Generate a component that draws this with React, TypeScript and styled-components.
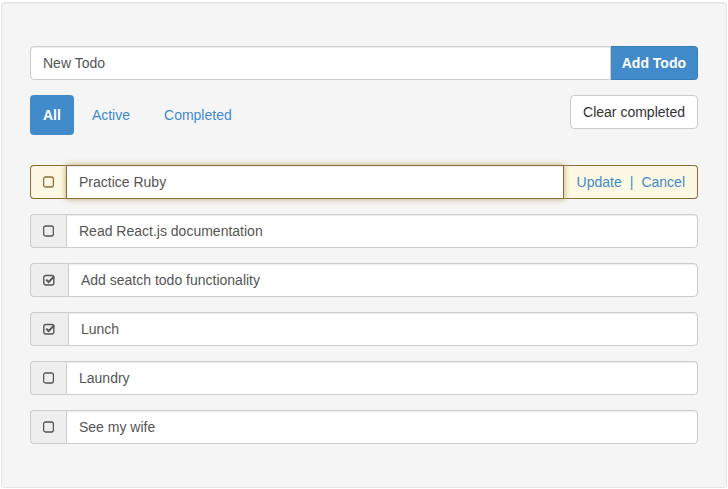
import React from "react";
import styled, { createGlobalStyle } from "styled-components";

const GlobalStyle = createGlobalStyle`
  html, body {
    margin: 0;
    padding: 0;
    background: #fff;
  }
  body {
    font-family: "Liberation Sans", Arial, sans-serif;
    font-size: 14px;
    line-height: 1.428571429;
    color: #333;
  }
  * {
    box-sizing: border-box;
  }
`;

const Well = styled.div`
  margin: 2px 1px 1px 1px;
  height: 486px;
  padding: 43px 28px;
  background-color: #f5f5f5;
  border: 1px solid #e3e3e3;
  border-radius: 4px;
  box-shadow: inset 0 1px 1px rgba(0, 0, 0, 0.05);
  display: flex;
  flex-direction: column;
`;

const InputGroup = styled.div`
  display: flex;
  height: 34px;
`;

const TextField = styled.input<{ $warning?: boolean }>`
  flex: 1;
  min-width: 0;
  height: 34px;
  padding: 6px 12px;
  font-family: inherit;
  font-size: 14px;
  color: #555;
  background: #fff;
  border: 1px solid ${(p) => (p.$warning ? "#8a6d3b" : "#ccc")};
  box-shadow: ${(p) =>
    p.$warning
      ? "inset 0 1px 1px rgba(0,0,0,.075), 0 0 6px #c0a16b"
      : "inset 0 1px 1px rgba(0,0,0,.075)"};
  outline: none;
  border-radius: 0;
  position: relative;
  z-index: ${(p) => (p.$warning ? 2 : 0)};
  &:first-child {
    border-radius: 4px 0 0 4px;
  }
  &:last-child {
    border-radius: 0 4px 4px 0;
  }
  &::placeholder {
    color: #555;
  }
`;

const PrimaryButton = styled.button`
  height: 34px;
  padding: 6px 11px;
  font-family: inherit;
  font-size: 14px;
  font-weight: bold;
  color: #fff;
  background-color: #428bca;
  border: 1px solid #357ebd;
  border-left: 0;
  border-radius: 0 4px 4px 0;
`;

const FilterBar = styled.div`
  display: flex;
  align-items: flex-start;
  justify-content: space-between;
  margin: 15px 0 30px;
`;

const Pills = styled.ul`
  display: flex;
  gap: 2px;
  margin: 0;
  padding: 0;
  list-style: none;
`;

const Pill = styled.a<{ $active?: boolean }>`
  display: block;
  padding: ${(p) => (p.$active ? "10px 13px" : "10px 16px")};
  line-height: 20px;
  border-radius: 4px;
  text-decoration: none;
  font-weight: ${(p) => (p.$active ? "bold" : "normal")};
  color: ${(p) => (p.$active ? "#fff" : "#428bca")};
  background: ${(p) => (p.$active ? "#428bca" : "transparent")};
`;

const DefaultButton = styled.button`
  height: 34px;
  padding: 6px 12px;
  font-family: inherit;
  font-size: 14px;
  color: #333;
  background: #fff;
  border: 1px solid #ccc;
  border-radius: 4px;
`;

const TodoList = styled.div`
  display: flex;
  flex-direction: column;
  gap: 15px;
`;

const Addon = styled.span<{ $warning?: boolean }>`
  display: flex;
  align-items: center;
  justify-content: center;
  padding: 6px 12px;
  font-size: 14px;
  color: ${(p) => (p.$warning ? "#8a6d3b" : "#555")};
  background-color: ${(p) => (p.$warning ? "#fcf8e3" : "#eee")};
  border: 1px solid ${(p) => (p.$warning ? "#8a6d3b" : "#ccc")};
  white-space: nowrap;
  &:first-child {
    border-right: 0;
    border-radius: 4px 0 0 4px;
  }
  &:last-child {
    border-left: 0;
    padding-left: 13px;
    border-radius: 0 4px 4px 0;
  }
`;

const LinkText = styled.a`
  color: #428bca;
  text-decoration: none;
`;

const Divider = styled.span`
  color: #428bca;
  margin: 0 8px;
`;

const Box = ({ checked }: { checked?: boolean }) =>
  checked ? (
    <svg width="13" height="12" viewBox="0 0 13 12">
      <rect x="0.8" y="1.5" width="10" height="9.5" rx="2" fill="none" stroke="#555" strokeWidth="1.4" />
      <path d="M3.2 5.6 L5.6 8 L11.2 2.4" fill="none" stroke="#555" strokeWidth="2" />
    </svg>
  ) : (
    <svg width="11" height="12" viewBox="0 0 11 12">
      <rect x="0.6" y="1" width="9.8" height="10" rx="2" fill="none" stroke="currentColor" strokeWidth="1.3" />
    </svg>
  );

type Todo = { text: string; done: boolean };

const todos: Todo[] = [
  { text: "Read React.js documentation", done: false },
  { text: "Add seatch todo functionality", done: true },
  { text: "Lunch", done: true },
  { text: "Laundry", done: false },
  { text: "See my wife", done: false },
];

export default function App() {
  return (
    <>
      <GlobalStyle />
      <Well>
        <InputGroup>
          <TextField placeholder="New Todo" />
          <PrimaryButton>Add Todo</PrimaryButton>
        </InputGroup>
        <FilterBar>
          <Pills>
            <li>
              <Pill $active>All</Pill>
            </li>
            <li>
              <Pill>Active</Pill>
            </li>
            <li>
              <Pill>Completed</Pill>
            </li>
          </Pills>
          <DefaultButton>Clear completed</DefaultButton>
        </FilterBar>
        <TodoList>
          <InputGroup>
            <Addon $warning>
              <Box />
            </Addon>
            <TextField $warning defaultValue="Practice Ruby" />
            <Addon $warning>
              <LinkText>Update</LinkText>
              <Divider>|</Divider>
              <LinkText>Cancel</LinkText>
            </Addon>
          </InputGroup>
          {todos.map((t) => (
            <InputGroup key={t.text}>
              <Addon>
                <Box checked={t.done} />
              </Addon>
              <TextField readOnly value={t.text} />
            </InputGroup>
          ))}
        </TodoList>
      </Well>
    </>
  );
}
